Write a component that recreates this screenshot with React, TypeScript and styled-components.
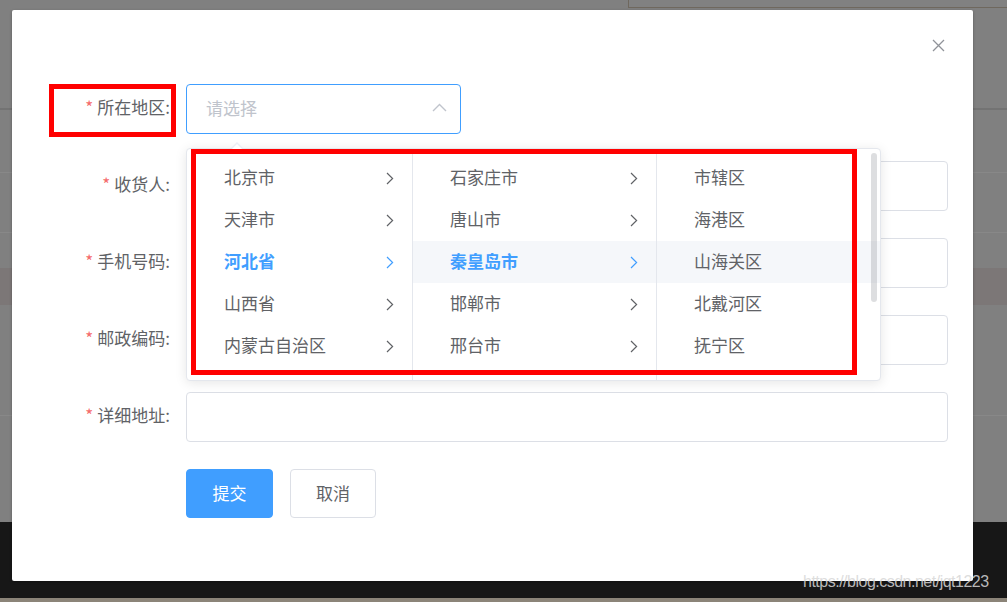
import React from "react";
import styled, { createGlobalStyle } from "styled-components";

const GlobalStyle = createGlobalStyle`
  html, body { margin: 0; padding: 0; }
  body {
    width: 1007px;
    height: 602px;
    overflow: hidden;
    background: #808080;
    font-family: "Noto Sans CJK SC", "Noto Sans", sans-serif;
  }
`;

const Page = styled.div`
  position: relative;
  width: 1007px;
  height: 602px;
  overflow: hidden;
`;

/* ---------- masked page underneath ---------- */
const Backdrop = styled.div`
  display: flex;
  flex-direction: column;
  height: 100%;
`;

const Stripe = styled.div<{ $h: number; $bg?: string; $line?: string; $lw?: number }>`
  flex: none;
  box-sizing: border-box;
  height: ${(p) => p.$h}px;
  background: ${(p) => p.$bg ?? "#808080"};
  border-bottom: ${(p) => (p.$line ? `${p.$lw ?? 1}px solid ${p.$line}` : "none")};
  display: flex;
  justify-content: flex-end;
  align-items: flex-start;
`;

const TopTab = styled.div`
  width: 379px;
  height: 8px;
  box-sizing: border-box;
  border-left: 1px solid #6f685e;
  border-bottom: 1px solid #6f685e;
  background: #818181;
`;

/* ---------- dialog ---------- */
const Dialog = styled.div`
  position: absolute;
  left: 12px;
  top: 10px;
  width: 961px;
  height: 571px;
  box-sizing: border-box;
  background: #fff;
  border-radius: 2px;
  box-shadow: 0 1px 3px rgba(0, 0, 0, 0.3);
  padding: 74px 25px 0 20px;
`;

const CloseBtn = styled.button`
  position: absolute;
  top: 28px;
  right: 28px;
  width: 14px;
  height: 14px;
  padding: 0;
  border: none;
  background: transparent;
  color: #909399;
  display: flex;
  align-items: center;
  justify-content: center;
`;

const Form = styled.div`
  display: flex;
  flex-direction: column;
  gap: 27px;
`;

const Row = styled.div`
  display: flex;
  align-items: center;
  height: 50px;
`;

const Label = styled.label`
  flex: none;
  box-sizing: border-box;
  width: 138px;
  height: 50px;
  margin-right: 16px;
  padding-bottom: 4px;
  text-align: right;
  font-size: 17px;
  line-height: 46px;
  color: #606266;
  white-space: nowrap;
`;

const Star = styled.span`
  color: #f56c6c;
  margin-right: 4px;
`;

const Input = styled.div`
  flex: 1;
  height: 50px;
  box-sizing: border-box;
  border: 1px solid #dcdfe6;
  border-radius: 4px;
  background: #fff;
`;

const SelectWrap = styled.div`
  position: relative;
  width: 275px;
  height: 50px;
`;

const SelectBox = styled.div`
  height: 50px;
  box-sizing: border-box;
  border: 1px solid #409eff;
  border-radius: 4px;
  padding: 0 13px 3px 19px;
  display: flex;
  align-items: center;
  justify-content: space-between;
  font-size: 17px;
  color: #c0c4cc;
`;

const ButtonRow = styled.div`
  display: flex;
  gap: 17px;
  padding-left: 154px;
`;

const Button = styled.button<{ $primary?: boolean }>`
  width: ${(p) => (p.$primary ? 87 : 86)}px;
  height: 49px;
  box-sizing: border-box;
  border-radius: 4px;
  font-family: "Noto Sans CJK SC", "Noto Sans", sans-serif;
  font-size: 17px;
  border: 1px solid ${(p) => (p.$primary ? "#409eff" : "#dcdfe6")};
  background: ${(p) => (p.$primary ? "#409eff" : "#fff")};
  color: ${(p) => (p.$primary ? "#fff" : "#606266")};
  padding: 0 0 3px;
`;

/* ---------- cascader dropdown ---------- */
const Popper = styled.div`
  position: absolute;
  top: calc(100% + 14px);
  left: 0;
  width: 695px;
  height: 233px;
  box-sizing: border-box;
  background: #fff;
  border: 1px solid #e4e7ed;
  border-radius: 4px;
  box-shadow: 0 2px 12px 0 rgba(0, 0, 0, 0.1);
  display: flex;
  z-index: 2;
`;

const Arrow = styled.div`
  position: absolute;
  top: -13px;
  left: 44px;
  width: 0;
  height: 0;
  border: 6px solid transparent;
  border-bottom-color: #ebeef5;
  &::after {
    content: "";
    position: absolute;
    left: -5px;
    top: -3px;
    border: 5px solid transparent;
    border-bottom-color: #fff;
  }
`;

const Menu = styled.div<{ $w: number; $last?: boolean }>`
  position: relative;
  flex: none;
  width: ${(p) => p.$w}px;
  box-sizing: border-box;
  padding: 8px 0;
  border-right: ${(p) => (p.$last ? "none" : "1px solid #e4e7ed")};
  overflow: hidden;
`;

const Node = styled.div<{ $active?: boolean; $hl?: boolean }>`
  height: 42px;
  box-sizing: border-box;
  display: flex;
  align-items: center;
  justify-content: space-between;
  padding: 0 18px 3px 37px;
  font-size: 17px;
  white-space: nowrap;
  color: ${(p) => (p.$active ? "#409eff" : "#606266")};
  font-weight: ${(p) => (p.$active ? 700 : 400)};
  background: ${(p) => (p.$hl ? "#f5f7fa" : "transparent")};

  & > svg {
    margin-top: 3px;
  }
`;

const Thumb = styled.div`
  position: absolute;
  top: 4px;
  right: 3px;
  width: 6px;
  height: 149px;
  border-radius: 3px;
  background: rgba(144, 147, 153, 0.3);
`;

/* ---------- annotation overlays ---------- */
const RedBox = styled.div<{ $x: number; $y: number; $w: number; $h: number }>`
  position: absolute;
  left: ${(p) => p.$x}px;
  top: ${(p) => p.$y}px;
  width: ${(p) => p.$w}px;
  height: ${(p) => p.$h}px;
  box-sizing: border-box;
  border: 5px solid #ff0000;
  z-index: 5;
  pointer-events: none;
`;

const Watermark = styled.div`
  position: absolute;
  left: 803px;
  top: 573px;
  font-family: "Liberation Sans", Arial, sans-serif;
  font-size: 16px;
  letter-spacing: -0.5px;
  color: rgba(215, 215, 215, 0.85);
  white-space: nowrap;
  z-index: 6;
`;

const Chevron = () => (
  <svg width="8" height="13" viewBox="0 0 8 13" fill="none">
    <path d="M1 1 L6.6 6.5 L1 12" stroke="currentColor" strokeWidth="1.2" />
  </svg>
);

const ArrowUp = () => (
  <svg width="15" height="9" viewBox="0 0 15 9" fill="none">
    <path d="M1 8 L7.5 1.5 L14 8" stroke="#c0c4cc" strokeWidth="1.4" />
  </svg>
);

const CloseIcon = () => (
  <svg width="13" height="13" viewBox="0 0 13 13" fill="none">
    <path d="M1 1 L12 12 M12 1 L1 12" stroke="currentColor" strokeWidth="1.3" />
  </svg>
);

const provinces = ["北京市", "天津市", "河北省", "山西省", "内蒙古自治区"];
const cities = ["石家庄市", "唐山市", "秦皇岛市", "邯郸市", "邢台市"];
const districts = ["市辖区", "海港区", "山海关区", "北戴河区", "抚宁区"];

const fields = ["收货人:", "手机号码:", "邮政编码:", "详细地址:"];

export default function App() {
  return (
    <Page>
      <GlobalStyle />
      <Backdrop>
        <Stripe $h={110} $line="#737373" $lw={2}>
          <TopTab />
        </Stripe>
        <Stripe $h={63} $line="#888888" />
        <Stripe $h={60} $line="#888888" />
        <Stripe $h={35} />
        <Stripe $h={37} $bg="#7c7777" />
        <Stripe $h={111} $line="#888888" />
        <Stripe $h={106} />
        <Stripe $h={76} $bg="#171717" />
        <Stripe $h={4} $bg="#8b8478" />
      </Backdrop>

      <Dialog>
        <CloseBtn aria-label="close">
          <CloseIcon />
        </CloseBtn>
        <Form>
          <Row>
            <Label>
              <Star>*</Star>所在地区:
            </Label>
            <SelectWrap>
              <SelectBox>
                <span>请选择</span>
                <ArrowUp />
              </SelectBox>
              <Popper>
                <Arrow />
                <Menu $w={226}>
                  {provinces.map((p, i) => (
                    <Node key={p} $active={i === 2}>
                      <span>{p}</span>
                      <Chevron />
                    </Node>
                  ))}
                </Menu>
                <Menu $w={244}>
                  {cities.map((c, i) => (
                    <Node key={c} $active={i === 2} $hl={i === 2}>
                      <span>{c}</span>
                      <Chevron />
                    </Node>
                  ))}
                </Menu>
                <Menu $w={223} $last>
                  {districts.map((d, i) => (
                    <Node key={d} $hl={i === 2}>
                      <span>{d}</span>
                    </Node>
                  ))}
                  <Thumb />
                </Menu>
              </Popper>
            </SelectWrap>
          </Row>
          {fields.map((f) => (
            <Row key={f}>
              <Label>
                <Star>*</Star>
                {f}
              </Label>
              <Input />
            </Row>
          ))}
          <ButtonRow>
            <Button $primary>提交</Button>
            <Button>取消</Button>
          </ButtonRow>
        </Form>
      </Dialog>

      <RedBox $x={49} $y={84} $w={127} $h={53} />
      <RedBox $x={191} $y={149} $w={666} $h={226} />

      <Watermark>https://blog.csdn.net/jqt1223</Watermark>
    </Page>
  );
}
